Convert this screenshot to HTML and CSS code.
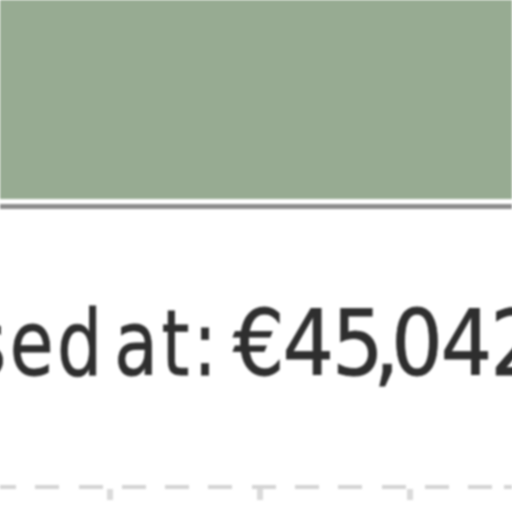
FILE: index.html
```html
<!DOCTYPE html>
<html>
<head>
<meta charset="utf-8">
<link rel="stylesheet" href="styles.css">
</head>
<body>
<div class="page">
  <div class="banner"></div>
  <div class="rule"></div>
  <div class="price-row">
    <span class="label">sed at:</span>
    <span class="amount">€45<span class="comma">,</span>042</span>
  </div>
  <div class="dashes"></div>
  <div class="ticks"></div>
</div>
</body>
</html>
```
FILE: styles.css
```css
html, body {
  margin: 0;
  padding: 0;
  width: 512px;
  height: 512px;
  overflow: hidden;
  background: #ffffff;
}
.page {
  width: 512px;
  height: 512px;
  display: flex;
  flex-direction: column;
  filter: blur(1.3px);
}
.banner {
  height: 199px;
  background: #97ab92;
  flex: none;
}
.rule {
  flex: none;
  height: 5px;
  margin-top: 5px;
  background: #8c8c8c;
}
.price-row {
  flex: none;
  height: 90px;
  margin-top: 90px;
  display: flex;
  align-items: flex-start;
  white-space: nowrap;
  font-family: "DejaVu Sans Condensed", "DejaVu Sans", sans-serif;
  font-size: 90px;
  line-height: 90px;
  color: #2e2e2e;
  -webkit-text-stroke: 0.8px #2e2e2e;
}
.label {
  flex: none;
  width: 264px;
  margin-left: -31px;
  display: inline-block;
  letter-spacing: 4px;
  word-spacing: -20px;
  transform: scaleX(0.88);
  transform-origin: left center;
}
.amount {
  flex: none;
  letter-spacing: -2px;
}
.comma {
  margin-left: -8px;
  margin-right: -6px;
}
.dashes {
  flex: none;
  margin-top: 96px;
  height: 4px;
  background-image: repeating-linear-gradient(to right, #d4d4d4 0 24px, transparent 24px 43.3px);
  background-position: -8px 0;
}
.ticks {
  flex: none;
  height: 11px;
  background-image: repeating-linear-gradient(to right, transparent 0 107px, #dadada 107px 113px, transparent 113px 150px);
}
```
